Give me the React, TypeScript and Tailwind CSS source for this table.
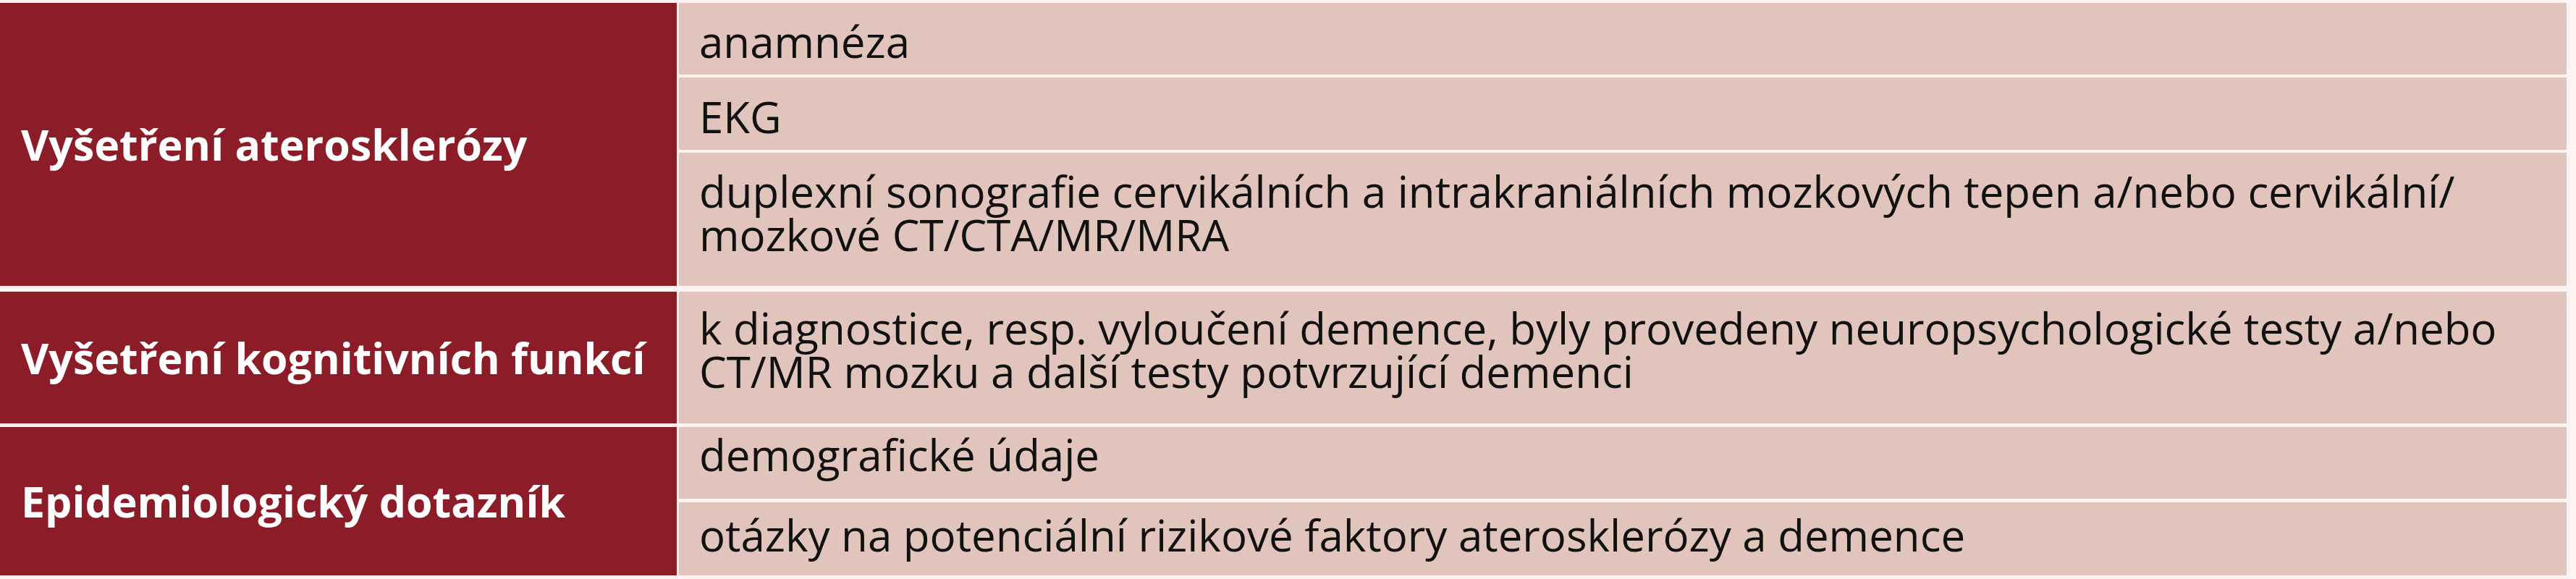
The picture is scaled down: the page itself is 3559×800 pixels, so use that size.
import React from "react";

const font = { fontFamily: '"Open Sans", "Noto Sans", sans-serif' };

const Cell = ({ lines, className }: { lines: string[]; className: string }) => (
  <div className={`bg-[#e1c4bc] pl-[28px] pr-[40px] text-[60px] text-[#111111] ${className}`}>
    {lines.map((l) => (
      <div key={l} className="h-[60px] leading-[60px] whitespace-nowrap">
        {l}
      </div>
    ))}
  </div>
);

const Head = ({ children }: { children: React.ReactNode }) => (
  <div className="flex w-[935px] shrink-0 items-center bg-[#8c1c28] pl-[29px] text-[59px] font-bold leading-none text-white">
    {children}
  </div>
);

const App = () => {
  return (
    <div className="h-[800px] w-[3559px] bg-[#fcf4f2] pt-[4px]" style={font}>
      <div className="flex w-[3546px] flex-col">
        {/* ateroskleroza */}
        <div className="flex h-[391px] gap-[3px]">
          <Head>Vyšetření aterosklerózy</Head>
          <div className="flex flex-1 flex-col gap-[4px]">
            <Cell className="h-[99px] pt-[23px]" lines={["anamnéza"]} />
            <Cell className="h-[100px] pt-[24px]" lines={["EKG"]} />
            <Cell
              className="h-[184px] pt-[23px]"
              lines={[
                "duplexní sonografie cervikálních a intrakraniálních mozkových tepen a/nebo cervikální/",
                "mozkové CT/CTA/MR/MRA",
              ]}
            />
          </div>
        </div>

        {/* kognitivni funkce */}
        <div className="mt-[8px] flex h-[182px] gap-[3px]">
          <Head>Vyšetření kognitivních funkcí</Head>
          <div className="flex flex-1 flex-col">
            <Cell
              className="h-[182px] pt-[20px]"
              lines={[
                "k diagnostice, resp. vyloučení demence, byly provedeny neuropsychologické testy a/nebo",
                "CT/MR mozku a další testy potvrzující demenci",
              ]}
            />
          </div>
        </div>

        {/* dotaznik */}
        <div className="mt-[5px] flex h-[205px] gap-[3px]">
          <Head>Epidemiologický dotazník</Head>
          <div className="flex flex-1 flex-col gap-[5px]">
            <Cell className="h-[99px] pt-[8px]" lines={["demografické údaje"]} />
            <Cell
              className="h-[101px] pt-[15px]"
              lines={["otázky na potenciální rizikové faktory aterosklerózy a demence"]}
            />
          </div>
        </div>
      </div>
    </div>
  );
};

export default App;
